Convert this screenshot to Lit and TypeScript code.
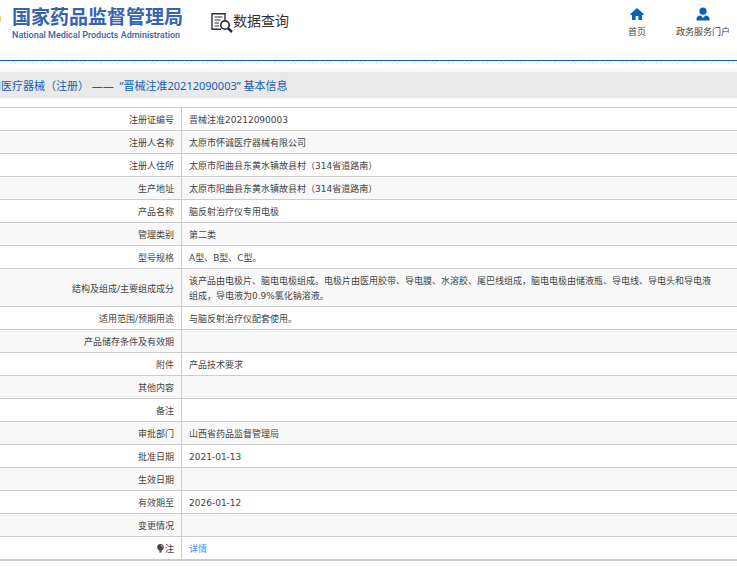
import { LitElement, html, css, svg } from "lit";
import { customElement } from "lit/decorators.js";

interface Row {
  label: string;
  value?: string;
}

const ROWS: Row[] = [
  { label: "注册证编号", value: "晋械注准20212090003" },
  { label: "注册人名称", value: "太原市怀诚医疗器械有限公司" },
  { label: "注册人住所", value: "太原市阳曲县东黄水镇故县村（314省道路南）" },
  { label: "生产地址", value: "太原市阳曲县东黄水镇故县村（314省道路南）" },
  { label: "产品名称", value: "脑反射治疗仪专用电极" },
  { label: "管理类别", value: "第二类" },
  { label: "型号规格", value: "A型、B型、C型。" },
  {
    label: "结构及组成/主要组成成分",
    value:
      "该产品由电极片、脑电电极组成。电极片由医用胶带、导电膜、水溶胶、尾巴线组成，脑电电极由储液瓶、导电线、导电头和导电液组成，导电液为0.9%氯化钠溶液。",
  },
  { label: "适用范围/预期用途", value: "与脑反射治疗仪配套使用。" },
  { label: "产品储存条件及有效期" },
  { label: "附件", value: "产品技术要求" },
  { label: "其他内容" },
  { label: "备注" },
  { label: "审批部门", value: "山西省药品监督管理局" },
  { label: "批准日期", value: "2021-01-13" },
  { label: "生效日期" },
  { label: "有效期至", value: "2026-01-12" },
  { label: "变更情况" },
];

const searchIcon = svg`
  <g fill="none" stroke="#2d2d3a">
    <path d="M14 8V1.7H1v15.6h9" stroke-width="1.4"/>
    <path d="M3.5 5h8M3.5 8h6M3.5 11h4.5M3.5 14h4.5" stroke-width="1.1"/>
    <circle cx="14" cy="13" r="4.2" stroke-width="1.7"/>
    <path d="M17 16.2l4 3.8" stroke-width="2.6"/>
  </g>`;

@customElement("site-header")
export class SiteHeader extends LitElement {
  static styles = css`
    :host {
      display: block;
    }
    .bar {
      display: flex;
      align-items: flex-start;
      height: 60px;
      border-bottom: 1px solid #1c5a9c;
    }
    .emblem {
      width: 1px;
      height: 6px;
      margin: 16px 11px 0 0;
      background: #f0cf86;
      flex: none;
    }
    .brand {
      display: block;
      padding-top: 6px;
      color: #3563ae;
      text-decoration: none;
      white-space: nowrap;
    }
    .name {
      display: block;
      font-size: 19px;
      line-height: 22px;
      font-weight: 700;
    }
    .english {
      display: block;
      font: 500 9px/14px Roboto, sans-serif;
    }
    .query {
      display: flex;
      margin: 12px 0 0 28px;
      font-size: 14px;
      line-height: 19px;
      color: #333;
      white-space: nowrap;
    }
    .query svg {
      width: 22px;
      height: 22px;
    }
    .links {
      display: flex;
      gap: 30px;
      margin: 6px 7px 0 auto;
    }
    .link {
      display: flex;
      flex-direction: column;
      align-items: center;
      gap: 2px;
      font-size: 9px;
      line-height: 16px;
      color: #444;
      text-decoration: none;
      white-space: nowrap;
    }
    .link svg {
      width: 16px;
      height: 16px;
      fill: #0b60b8;
    }
    .shade {
      height: 3px;
      background: repeating-linear-gradient(135deg, #dceef8 0 1px, #f8fcfe 1px 3px);
    }
    .fade {
      height: 8px;
      background: linear-gradient(#fff, #f8f8f8);
    }
  `;

  render() {
    return html`
      <header class="bar">
        <span class="emblem"></span>
        <a class="brand" href="#">
          <span class="name">国家药品监督管理局</span>
          <span class="english" lang="en">National Medical Products Administration</span>
        </a>
        <div class="query">
          <svg viewBox="0 0 22 22" aria-hidden="true">${searchIcon}</svg>
          <span>数据查询</span>
        </div>
        <nav class="links">
          <a class="link" href="#">
            <svg viewBox="0 0 16 16" aria-hidden="true">
              <path d="M8 2L1.5 7.7V9H3v5h3.6v-4h2.8v4H13V9h1.5V7.7z" />
            </svg>
            <span>首页</span>
          </a>
          <a class="link" href="#">
            <svg viewBox="0 0 16 16" aria-hidden="true">
              <circle cx="8" cy="5.2" r="3.6" />
              <path d="M1.5 14.5v-1.8c0-1.9 1.6-3 4.2-3.2L8 12l2.3-2.5c2.6.2 4.2 1.3 4.2 3.2v1.8z" />
            </svg>
            <span>政务服务门户</span>
          </a>
        </nav>
      </header>
      <div class="shade"></div>
      <div class="fade"></div>
    `;
  }
}

@customElement("record-table")
export class RecordTable extends LitElement {
  static styles = css`
    :host {
      display: block;
    }
    .table {
      width: 100%;
      table-layout: fixed;
      border-collapse: separate;
      border-spacing: 0;
      border-top: 1px solid #ccc;
      border-bottom: 1px solid #ccc;
      font-size: 9px;
      line-height: 15px;
      color: #444;
    }
    .labels {
      width: 182px;
    }
    .label,
    .value {
      height: 15px;
      padding-block: 5px 2px;
      border-bottom: 1px solid #ccc;
      font-weight: 400;
      vertical-align: middle;
    }
    .label {
      padding-inline: 0 7px;
      border-right: 1px solid #ccc;
      text-align: right;
    }
    .value {
      padding-inline: 7px 20px;
    }
    .row:nth-child(even) {
      background: #f8f8f8;
    }
    .bulb {
      width: 7px;
      height: 9px;
      margin-right: 1px;
      vertical-align: -1px;
    }
    .detail {
      color: #3a94ee;
      text-decoration: none;
    }
  `;

  render() {
    return html`
      <table class="table">
        <colgroup>
          <col class="labels" />
          <col />
        </colgroup>
        <tbody>
          ${ROWS.map(
            (row) => html`<tr class="row">
              <th class="label" scope="row">${row.label}</th>
              <td class="value">${row.value}</td>
            </tr>`
          )}
          <tr class="row">
            <th class="label" scope="row"><svg class="bulb" viewBox="0 0 7 9" aria-hidden="true">
                <circle cx="3.5" cy="3.3" r="3.2" fill="#444" />
                <path d="M2.3 6h2.4v2.6H2.3z" fill="#555" />
                <path d="M4 1.2q1.3.3 1.4 1.6" stroke="#fff" stroke-width=".7" fill="none" /></svg
              >注</th>
            <td class="value"><a class="detail" href="#">详情</a></td>
          </tr>
        </tbody>
      </table>
    `;
  }
}

@customElement("app-root")
export class AppRoot extends LitElement {
  static styles = css`
    :host {
      display: block;
      overflow: hidden;
      background: #fff;
      font-family: "DejaVu Sans", "Noto Sans CJK SC", sans-serif;
    }
    .heading {
      margin: 0 0 9px;
      padding: 5px 0 3px;
      background: #e9e9e9;
      color: #0f62b5;
      font: 400 11px/18px "Noto Sans", "Noto Sans CJK SC", sans-serif;
      text-indent: -21px;
      white-space: nowrap;
    }
  `;

  render() {
    return html`
      <site-header></site-header>
      <main>
        <h1 class="heading">境内医疗器械（注册） —— &nbsp;“晋械注准20212090003” 基本信息</h1>
        <record-table></record-table>
      </main>
    `;
  }
}
